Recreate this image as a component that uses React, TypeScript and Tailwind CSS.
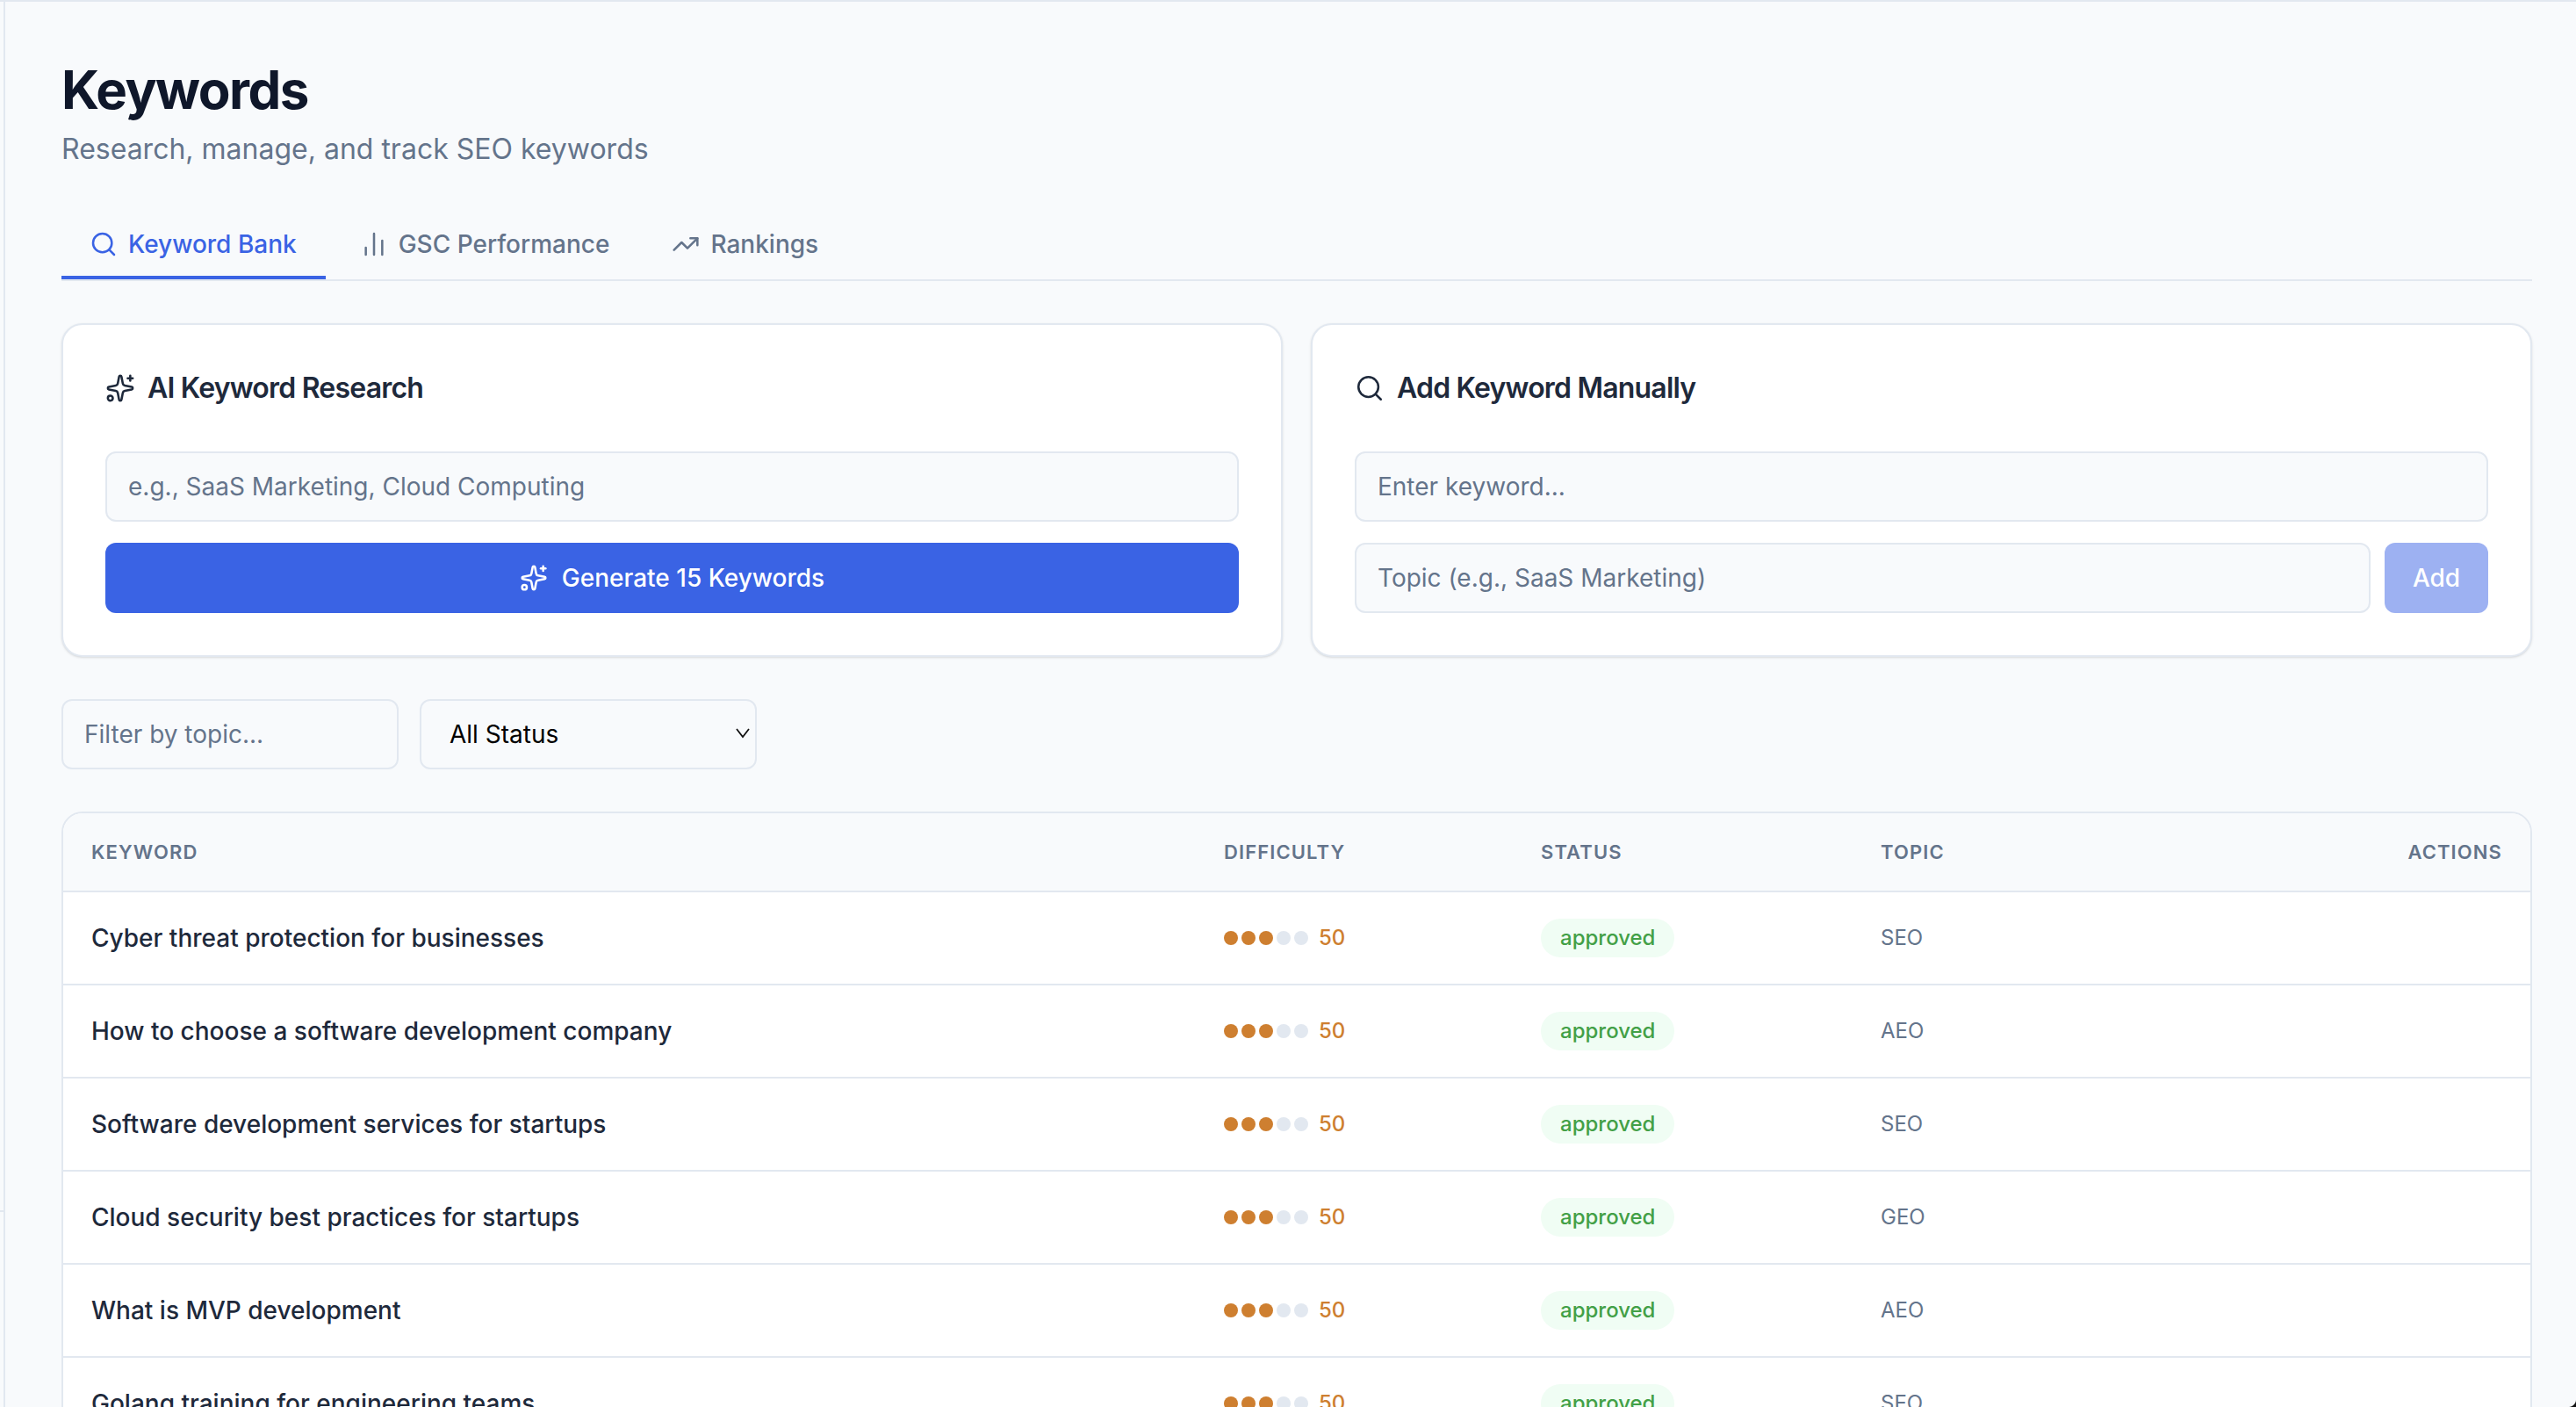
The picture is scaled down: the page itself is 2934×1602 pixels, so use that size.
import { BarChart2, Search, Sparkles, TrendingUp } from "lucide-react";

const rows = [
  { keyword: "Cyber threat protection for businesses", topic: "SEO" },
  { keyword: "How to choose a software development company", topic: "AEO" },
  { keyword: "Software development services for startups", topic: "SEO" },
  { keyword: "Cloud security best practices for startups", topic: "GEO" },
  { keyword: "What is MVP development", topic: "AEO" },
  { keyword: "Golang training for engineering teams", topic: "SEO" },
];

const inputClass =
  "h-[80px] w-full rounded-[12px] border-2 border-[#e2e8f0] bg-[#f8fafc] px-[24px] text-[28px] text-[#0f172a] outline-none placeholder:text-[#64748b]";

const gridCols = "grid grid-cols-[1290px_361px_387px_1fr] items-center";

function Difficulty({ value }: { value: number }) {
  const filled = Math.round(value / 20);
  return (
    <div className="flex items-center gap-[12px]">
      <div className="flex gap-[4px]">
        {[0, 1, 2, 3, 4].map((i) => (
          <span
            key={i}
            className={
              i < filled
                ? "size-[16px] rounded-full bg-[#ce7f30]"
                : "size-[16px] rounded-full bg-[#e2e8f0]"
            }
          />
        ))}
      </div>
      <span className="text-[24px] font-medium text-[#ce7f30]">{value}</span>
    </div>
  );
}

export default function App() {
  return (
    <div className="relative flex h-[1602px] overflow-hidden bg-[#f8fafc] font-['Inter',sans-serif]">
      {/* sliver of the sidebar */}
      <div className="flex w-[4px] flex-col border-t-2 border-[#e2e8f0]">
        <div className="h-[1378px] border-b-2 border-[#e2e8f0]" />
      </div>

      <main className="min-w-0 flex-1 border-t-2 border-l-2 border-[#e2e8f0] pt-[64px] pr-[50px] pl-[64px]">
        <h1 className="text-[60px] leading-[72px] font-bold tracking-[-0.025em] text-[#0f172a]">
          Keywords
        </h1>
        <p className="mt-[8px] text-[32px] leading-[48px] text-[#64748b]">
          Research, manage, and track SEO keywords
        </p>

        {/* Tabs */}
        <div className="mt-[42px] flex gap-[7px] border-b-2 border-[#e2e8f0]">
          <button className="flex h-[82px] items-center gap-[12px] border-b-4 border-[#3a63e4] pt-[6px] pr-[33px] pl-[32px] text-[28px] font-medium text-[#3a63e4]">
            <Search size={32} strokeWidth={1.9} />
            Keyword Bank
          </button>
          <button className="flex h-[82px] items-center gap-[12px] border-b-4 border-transparent px-[32px] pt-[6px] text-[28px] font-medium text-[#64748b]">
            <BarChart2 size={32} strokeWidth={1.9} />
            GSC Performance
          </button>
          <button className="flex h-[82px] items-center gap-[12px] border-b-4 border-transparent px-[32px] pt-[6px] text-[28px] font-medium text-[#64748b]">
            <TrendingUp size={32} strokeWidth={1.9} />
            Rankings
          </button>
        </div>

        {/* Research + manual cards */}
        <div className="mt-[48px] grid grid-cols-2 gap-[32px]">
          <section className="rounded-[24px] border-2 border-[#e2e8f0] bg-white p-[48px] shadow-sm">
            <h2 className="flex h-[48px] items-center gap-[14px] text-[32px] font-semibold tracking-[-0.025em] text-[#1e293b]">
              <Sparkles size={34} strokeWidth={1.8} />
              AI Keyword Research
            </h2>
            <div className="mt-[48px] flex flex-col gap-[24px]">
              <input className={inputClass} placeholder="e.g., SaaS Marketing, Cloud Computing" />
              <button className="flex h-[80px] items-center justify-center gap-[16px] rounded-[12px] bg-[#3a63e4] text-[28px] font-medium text-white">
                <Sparkles size={32} strokeWidth={1.9} />
                Generate 15 Keywords
              </button>
            </div>
          </section>

          <section className="rounded-[24px] border-2 border-[#e2e8f0] bg-white p-[48px] shadow-sm">
            <h2 className="flex h-[48px] items-center gap-[14px] text-[32px] font-semibold tracking-[-0.025em] text-[#1e293b]">
              <Search size={34} strokeWidth={1.8} />
              Add Keyword Manually
            </h2>
            <div className="mt-[48px] flex flex-col gap-[24px]">
              <input className={inputClass} placeholder="Enter keyword..." />
              <div className="flex gap-[16px]">
                <input className={inputClass} placeholder="Topic (e.g., SaaS Marketing)" />
                <button className="h-[80px] w-[118px] shrink-0 rounded-[12px] bg-[#9db1f2] text-[28px] font-medium text-white">
                  Add
                </button>
              </div>
            </div>
          </section>
        </div>

        {/* Filters */}
        <div className="mt-[48px] flex gap-[24px]">
          <div className="w-[384px]">
            <input className={inputClass} placeholder="Filter by topic..." />
          </div>
          <div className="relative w-[384px]">
            <select className="h-[80px] w-full appearance-none rounded-[12px] border-2 border-[#e2e8f0] bg-[#f8fafc] px-[32px] text-[28px] text-black outline-none">
              <option>All Status</option>
            </select>
            <svg
              className="pointer-events-none absolute top-[33px] right-[8px]"
              width="16"
              height="12"
              viewBox="0 0 16 12"
              fill="none"
              stroke="#111"
              strokeWidth="1.8"
            >
              <path d="M1 1l7 9 7-9" />
            </svg>
          </div>
        </div>

        {/* Keyword table */}
        <div className="mt-[48px] rounded-t-[24px] border-2 border-[#e2e8f0] bg-white">
          <div
            className={`${gridCols} h-[90px] rounded-t-[22px] border-b-2 border-[#e2e8f0] bg-[#f8fafc] text-[22px] font-semibold tracking-[0.05em] text-[#64748b] uppercase`}
          >
            <div className="pl-[32px]">Keyword</div>
            <div className="pl-[32px]">Difficulty</div>
            <div className="pl-[32px]">Status</div>
            <div className="flex justify-between px-[32px]">
              <span>Topic</span>
              <span>Actions</span>
            </div>
          </div>
          {rows.map((row) => (
            <div key={row.keyword} className={`${gridCols} h-[106px] border-b-2 border-[#e2e8f0]`}>
              <div className="pl-[32px] text-[28px] font-medium text-[#1e293b]">{row.keyword}</div>
              <div className="pl-[32px]">
                <Difficulty value={50} />
              </div>
              <div className="pl-[32px]">
                <span className="inline-flex h-[44px] items-center rounded-full bg-[#f0fdf4] px-[22px] text-[24px] font-medium text-[#43a047]">
                  approved
                </span>
              </div>
              <div className="pl-[32px] text-[24px] text-[#64748b]">{row.topic}</div>
            </div>
          ))}
        </div>
      </main>

      {/* window corner */}
      <svg className="absolute right-0 bottom-0" width="8" height="8" viewBox="0 0 8 8">
        <path d="M8 0V8H0C4 8 8 4 8 0Z" fill="#111" />
      </svg>
    </div>
  );
}
